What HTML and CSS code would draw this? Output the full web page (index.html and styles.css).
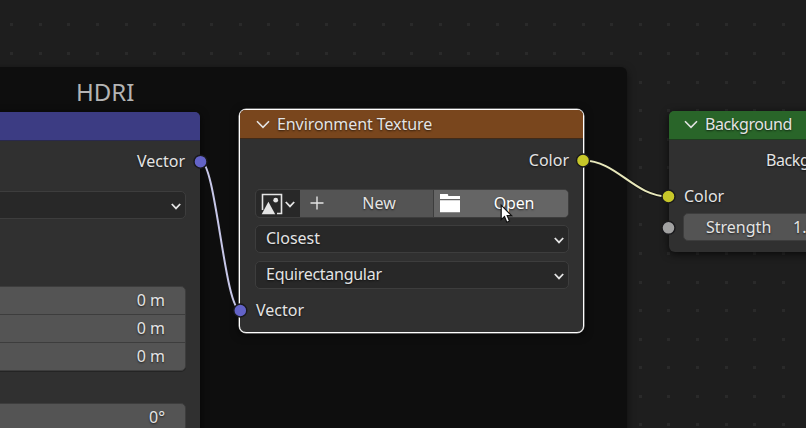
FILE: index.html
```html
<!DOCTYPE html>
<html lang="en">
<head>
<meta charset="utf-8">
<title>Node Editor</title>
<link rel="stylesheet" href="styles.css">
</head>
<body>
<main class="canvas">
  <svg class="grid" width="806" height="428" aria-hidden="true">
    <defs>
      <g id="row"><path d="M10 0h3v3h-3zM39 0h3v3h-3zM67 0h3v3h-3zM96 0h3v3h-3zM125 0h3v3h-3zM153 0h3v3h-3zM182 0h3v3h-3z"/></g>
      <g id="line"><use href="#row"/><use href="#row" x="200"/><use href="#row" x="400"/><use href="#row" x="600"/></g>
      <g id="block"><use href="#line" y="23"/><use href="#line" y="52"/><use href="#line" y="81"/><use href="#line" y="109"/><use href="#line" y="138"/><use href="#line" y="166"/><use href="#line" y="195"/></g>
    </defs>
    <use href="#block"/><use href="#block" y="200"/><use href="#line" y="423"/>
  </svg>

  <section class="frame"><h1 class="frame-title">HDRI</h1></section>

  <article class="node mapping">
    <header class="head"></header>
    <div class="row out"><span>Vector</span></div>
    <div class="select"><span></span><svg class="chev" viewBox="0 0 10 7"><path d="M.8 1 5 5.400 9.200 1"/></svg></div>
    <div class="group">
      <div class="num">0 m</div>
      <div class="num">0 m</div>
      <div class="num">0 m</div>
    </div>
    <div class="group rotation"><div class="num">0°</div></div>
  </article>

  <article class="node environment">
    <header class="head"><svg class="fold" viewBox="0 0 14 9"><path d="M1 1.3 7 7.3 13 1.3"/></svg><span>Environment Texture</span></header>
    <div class="row out"><span>Color</span></div>
    <div class="picker">
      <div class="browse">
        <svg class="image" viewBox="0 0 22 22"><path class="line" d="M1.500 17V1.500h19v19h-4.500"/><path class="fill" d="M.7 21.200 7.400 8.800 14.200 21.200z"/><circle class="fill" cx="14.700" cy="7.200" r="2.400"/></svg>
        <svg class="chev" viewBox="0 0 10 7"><path d="M.8 1 5 5.400 9.200 1"/></svg>
      </div>
      <div class="new"><svg class="plus" viewBox="0 0 14 14"><path d="M7 .5v13M.5 7h13"/></svg><span>New</span></div>
      <div class="open"><svg class="folder" viewBox="0 0 20 19"><path d="M0 0h7.2q1 0 1 1v1H20v3H0zM0 6.2h20v12H0z"/></svg><span>Open</span></div>
    </div>
    <div class="select"><span>Closest</span><svg class="chev" viewBox="0 0 10 7"><path d="M.8 1 5 5.400 9.200 1"/></svg></div>
    <div class="select projection"><span>Equirectangular</span><svg class="chev" viewBox="0 0 10 7"><path d="M.8 1 5 5.400 9.200 1"/></svg></div>
    <div class="row in"><span>Vector</span></div>
  </article>

  <article class="node background">
    <header class="head"><svg class="fold" viewBox="0 0 14 9"><path d="M1 1.3 7 7.3 13 1.3"/></svg><span>Background</span></header>
    <div class="row out"><span>Background</span></div>
    <div class="row in"><span>Color</span></div>
    <div class="strength"><span>Strength</span><span>1.000</span></div>
  </article>

  <svg class="links" width="806" height="428" aria-hidden="true">
    <path class="shade" d="M200.500 161C216 161 224.500 310.500 240.500 310.500"/>
    <path class="vector-link" d="M200.500 161C216 161 224.500 310.500 240.500 310.500"/>
    <path class="shade" d="M583 160.500C617 160.500 634 196.500 668.500 196.500"/>
    <path class="color-link" d="M583 160.500C617 160.500 634 196.500 668.500 196.500"/>
    <circle class="vector" cx="200.500" cy="161.700" r="6.500"/>
    <circle class="vector" cx="240.300" cy="310.500" r="6.500"/>
    <circle class="color" cx="583" cy="160.500" r="6.500"/>
    <circle class="color" cx="668.500" cy="196.500" r="6.500"/>
    <circle class="value" cx="668.500" cy="227.800" r="6.500"/>
  </svg>

  <svg class="cursor" viewBox="0 0 13 20"><path d="M1.200 1.200V15.600L4.500 12.600 6.800 18.200 9.500 17 7.200 11.700H11.600z"/></svg>
</main>
</body>
</html>
```

FILE: styles.css
```css
* { box-sizing: border-box; }
body { margin: 0; background: #1e1e1e; overflow: hidden; }
.canvas {
  position: relative;
  width: 806px;
  height: 428px;
  overflow: hidden;
  background: #1e1e1e;
  color: #e4e4e4;
  font: 16px/20px "Noto Sans", "Open Sans", sans-serif;
  text-shadow: 0 1px 2px rgba(0, 0, 0, .65);
  white-space: nowrap;
}
svg { display: block; flex: none; fill: none; overflow: visible; }
.grid, .links { position: absolute; left: 0; top: 0; }
.grid { fill: #2a2a2a; shape-rendering: crispEdges; }

.frame {
  position: absolute;
  left: -20px;
  top: 67px;
  width: 647px;
  height: 400px;
  padding: 10px 0 0 96px;
  border-radius: 6px;
  background: rgba(14, 14, 14, .96);
  box-shadow: 0 3px 8px rgba(0, 0, 0, .55);
}
.frame-title { margin: 0; font-size: 24px; line-height: 30px; font-weight: 400; color: #b4b4b4; text-shadow: none; }

.node {
  position: absolute;
  display: flex;
  flex-direction: column;
  border-radius: 6px;
  background: #303030;
  box-shadow: 0 2px 8px rgba(0, 0, 0, .7);
}
.head {
  display: flex;
  align-items: center;
  height: 29px;
  gap: 8px;
  padding-left: 15px;
  border-radius: 5px 5px 0 0;
  flex: none;
}
.fold { width: 14px; height: 9px; stroke: #e4e4e4; stroke-width: 1.6; }
.row { display: flex; align-items: center; height: 20px; flex: none; }
.out { justify-content: flex-end; padding-right: 14px; }
.in { padding-left: 15px; }
.chev { width: 10px; height: 7px; stroke: #e4e4e4; stroke-width: 1.8; }
.select {
  display: flex;
  align-items: center;
  justify-content: space-between;
  height: 28px;
  flex: none;
  padding: 0 4px 2px 10px;
  border: 1px solid #3d3d3d;
  border-radius: 5px;
  background: #282828;
}
.select .chev { margin-top: 4px; }

.mapping { left: -20px; top: 112px; width: 220px; height: 340px; }
.mapping .head { background: #3c3c83; border-bottom: 1px solid #29294c; }
.mapping .out { margin-top: 10px; padding-right: 15px; }
.mapping .select { margin: 20px 14px 0 0; }
.group {
  margin: 67px 14px 0 0;
  border: 1px solid #3d3d3d;
  border-radius: 5px;
  background: #545454;
  overflow: hidden;
  box-shadow: 0 1px 0 #242424;
  flex: none;
}
.num { height: 28px; padding: 3px 20px 0 0; text-align: right; }
.num:first-child { height: 27px; }
.num + .num { border-top: 1px solid #3d3d3d; }
.rotation { margin-top: 32px; }

.environment {
  left: 239px;
  top: 109px;
  width: 345px;
  height: 224px;
  border: 1px solid #fff;
  border-radius: 7px;
  box-shadow: 0 0 0 .5px rgba(255, 255, 255, .7), 0 2px 8px rgba(0, 0, 0, .7);
}
.environment .head { padding-left: 16px; gap: 7px; letter-spacing: -.08px; background: #79461d; border-bottom: 1px solid #412a18; }
.environment .out { margin-top: 11px; }
.picker {
  display: flex;
  height: 29px;
  flex: none;
  margin: 19px 14px 0 15px;
  border: 1px solid #3d3d3d;
  border-radius: 5px;
  overflow: hidden;
  background: #545454;
}
.browse { display: flex; align-items: center; gap: 2px; width: 44px; padding-left: 5px; background: #282828; }
.browse .chev { margin-top: 1px; }
.image { width: 22px; height: 22px; }
.line { stroke: #e4e4e4; stroke-width: 1.6; }
.fill { fill: #e4e4e4; }
.new { display: flex; align-items: center; width: 134px; padding: 0 0 1px 10px; border-right: 1px solid #3d3d3d; }
.plus { width: 14px; height: 14px; stroke: #e4e4e4; stroke-width: 1.4; }
.new span, .open span { flex: 1; text-align: center; }
.new span { padding-right: 1px; padding-left: 2px; }
.open { display: flex; align-items: center; flex: 1; padding-left: 6px; background: #656565; color: #fff; letter-spacing: -.2px; }
.open span { padding: 0 0 1px 0; }
.folder { width: 20px; height: 19px; fill: #fff; }
.environment .select { margin: 7px 14px 0 15px; }
.environment .select + .select { margin-top: 8px; }
.projection { letter-spacing: -.27px; }
.environment .in { margin-top: 11px; padding-left: 16px; }

.background { left: 669px; top: 111px; width: 200px; height: 141px; }
.background .head { padding-bottom: 2px; gap: 7px; letter-spacing: -.4px; background: #296529; border-bottom: 1px solid #1f3d1f; }
.background .out { margin-top: 10px; padding-right: 16px; letter-spacing: -.4px; }
.background .in { margin-top: 16px; }
.strength {
  display: flex;
  justify-content: space-between;
  height: 28px;
  margin: 7px 14px 0 14px;
  padding: 3px 20px 0 22px;
  border: 1px solid #3d3d3d;
  border-radius: 5px;
  background: #545454;
}

.shade { stroke: #111; stroke-width: 3.8; }
.vector-link { stroke: #c7c7e8; stroke-width: 2; }
.color-link { stroke: #e8e8bb; stroke-width: 2; }
.links circle { stroke: #19191c; stroke-width: 1.4; }
.vector { fill: #6363c7; }
.color { fill: #c7c729; }
.value { fill: #a1a1a1; }
.cursor { position: absolute; left: 500px; top: 204px; width: 13px; height: 20px; fill: #fff; stroke: #111; stroke-width: 1.2; }
```
